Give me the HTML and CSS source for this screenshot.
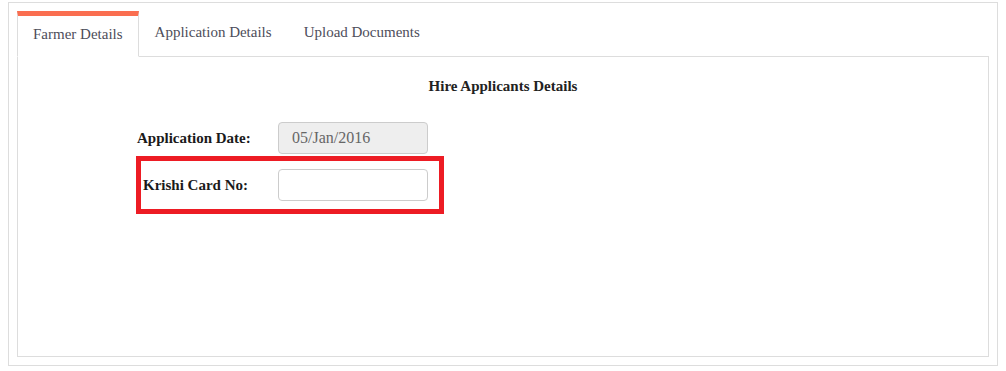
FILE: index.html
```html
<!DOCTYPE html>
<html lang="en">
<head>
  <meta charset="UTF-8" />
  <meta name="viewport" content="width=device-width, initial-scale=1.0">
  <title>Hire Applicants - Farmer Details</title>
  <link rel="stylesheet" href="styles.css">
</head>
<body>
<div class="wrapper">
  <ul class="tabs">
    <li class="tab active">Farmer Details</li>
    <li class="tab">Application Details</li>
    <li class="tab">Upload Documents</li>
  </ul>

  <div class="tab-content">
    <h4 class="section-title">Hire Applicants Details</h4>

    <div class="form-row">
      <label class="form-label">Application Date:</label>
      <input class="form-input" type="text" value="05/Jan/2016" readonly>
    </div>

    <div class="form-row highlight">
      <label class="form-label">Krishi Card No:</label>
      <input class="form-input" type="text">
    </div>
  </div>
</div>
</body>
</html>
```

FILE: styles.css
```css
body {
  font-family: "Liberation Serif", "Times New Roman", serif;
  font-size: 15px;
  background: #fff;
  color: #222;
  margin: 0;
}

.wrapper {
  margin: 2px 8px 0;
  padding: 8px;
  border: 1px solid #ddd;
  height: 346px;
}

.tabs {
  display: flex;
  align-items: flex-start;
  list-style: none;
  margin: 0;
  padding: 0;
  border-bottom: 1px solid #ddd;
}

.tab {
  margin-bottom: -1px;
  padding: 10px 15px;
  line-height: 20px;
  color: #4d4d5a;
  border: 1px solid transparent;
}

.tab.active {
  background: #fff;
  border-color: #ddd;
  border-top: 5px solid #fa6e50;
  border-bottom-color: transparent;
  padding: 8px 15px 12px;
}

.tab-content {
  border: 1px solid #ddd;
  border-top: none;
  height: 300px;
  padding: 19px 0 0 119px;
  box-sizing: border-box;
}

.section-title {
  margin: 0 0 26px -119px;
  text-align: center;
  font-size: 15px;
  line-height: 20px;
  font-weight: bold;
}

.form-row {
  display: flex;
  align-items: center;
  margin-bottom: 2px;
}

.form-label {
  width: 111px;
  text-align: right;
  font-weight: bold;
  color: #1a1a1a;
  white-space: nowrap;
}

.form-input {
  box-sizing: border-box;
  width: 150px;
  height: 32px;
  margin-left: 30px;
  padding: 0 13px;
  font-family: inherit;
  font-size: 16px;
  color: #666;
  background: #fff;
  border: 1px solid #ccc;
  border-radius: 4px;
  outline: none;
}

.form-input[readonly] {
  background: #eee;
}

.highlight {
  width: fit-content;
  margin-left: -1px;
  padding: 8px 11px 8px 0;
  border: 5px solid #ed1c24;
}

.highlight .form-label {
  width: 107px;
}
```
